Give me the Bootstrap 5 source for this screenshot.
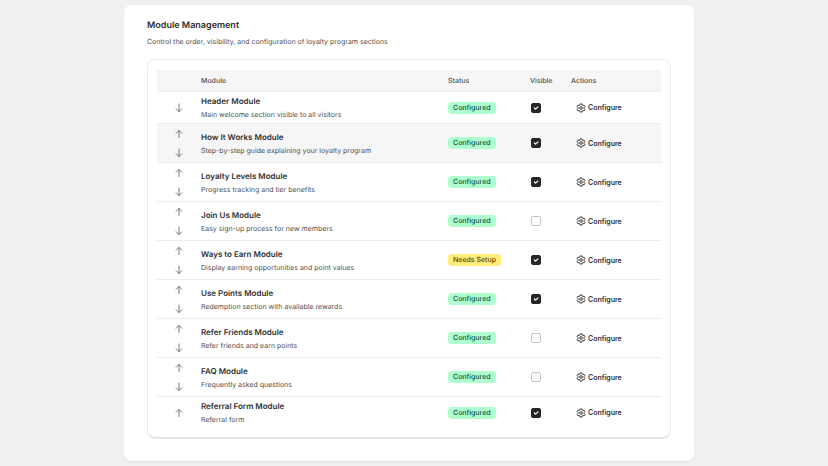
<!DOCTYPE html>
<html lang="en">
<head>
<meta charset="utf-8">
<meta name="viewport" content="width=device-width, initial-scale=1">
<title>Module Management</title>
<link href="https://cdn.jsdelivr.net/npm/bootstrap@5.3.0/dist/css/bootstrap.min.css" rel="stylesheet">
<style>
  body { background: #f0f0f0; color: #303030; font-family: Inter, "Liberation Sans", sans-serif; font-size: 7px; line-height: 13px; text-rendering: geometricPrecision; }
  .page { padding: 5px 134px 5px 124px; }
  .panel { background: #fff; border-radius: 8px; padding: 14px 23px 23px; box-shadow: 0 1px 1px #e4e4e4; }
  .panel-title { font-size: 9px; line-height: 13px; font-weight: 600; margin: 0 0 3px; }
  .panel-note { color: #505050; margin: 0 0 11px; }
  .list-box { border: 1px solid #ececec; border-bottom-color: #dcdcdc; border-radius: 8px; padding: 10px 9px 9px; box-shadow: 0 1px 1px #ececec; }
  .modules { --bs-table-bg: transparent; table-layout: fixed; color: inherit; }
  .modules > thead th { background: #f6f6f6; color: #505050; font-weight: 500; padding: 4px 0; border-bottom: 1px solid #ededed; }
  .modules > tbody td, .modules > tbody th { padding: 0; border-bottom: 1px solid #ededed; vertical-align: middle; font-weight: 400; }
  .modules > tbody th { padding: 3px 0 2px; }
  .modules > tbody tr:last-child > * { border-bottom: 0; }
  .modules > tbody tr.current > * { background: #f6f6f6; }
  .c-move { width: 44px; } .c-status { width: 82px; } .c-visible { width: 41px; } .c-action { width: 90px; }
  .move-btn { width: 20px; height: 19px; border: 0; padding: 0; background: none; color: #6a6a6a; }
  .name { font-size: 8px; font-weight: 600; }
  .about { color: #505050; }
  .pill { display: block; width: fit-content; font-weight: 500; line-height: 12px; padding: 0 5px; border-radius: 4px; }
  .pill-ok { background: #affecf; color: #0c5132; }
  .pill-warn { background: #ffeb78; color: #4f4700; }
  .modules .form-check-input { display: block; width: 10px; height: 10px; margin: 0 0 0 1px; border: 1px solid #c4c4c4; border-radius: 2px; }
  .modules .form-check-input:checked { background-color: #262626; border-color: #262626; }
  .conf-btn { border: 0; background: none; padding: 0 5px; gap: 2px; font-weight: 600; color: #303030; }
</style>
<script src="https://cdn.jsdelivr.net/npm/bootstrap@5.3.0/dist/js/bootstrap.bundle.min.js" defer></script>
</head>
<body>
<svg class="d-none" aria-hidden="true">
  <symbol id="up" viewBox="0 0 10 10"><path d="M5 8.500V1.500M2.200 4.200 5 1.400 7.800 4.200" fill="none" stroke="currentColor" stroke-width=".9" stroke-linecap="round" stroke-linejoin="round"/></symbol>
  <symbol id="down" viewBox="0 0 10 10"><path d="M5 1V8.500M2.200 5.800 5 8.600 7.800 5.800" fill="none" stroke="currentColor" stroke-width=".9" stroke-linecap="round" stroke-linejoin="round"/></symbol>
  <symbol id="gear" viewBox="0 0 20 20"><path d="M8.300 1.800h3.400l.6 2.300 1.600.9 2.300-.7 1.700 3-1.700 1.700v2l1.700 1.700-1.700 3-2.300-.7-1.600.9-.6 2.300H8.300l-.6-2.300-1.600-.9-2.300.7-1.700-3L3.800 11V9L2.100 7.300l1.700-3 2.300.7 1.600-.9z" fill="none" stroke="currentColor" stroke-width="1.900" stroke-linejoin="round"/><circle cx="10" cy="10" r="2.700" fill="none" stroke="currentColor" stroke-width="1.900"/></symbol>
</svg>
<main class="page">
  <section class="panel">
    <h1 class="panel-title">Module Management</h1>
    <p class="panel-note">Control the order, visibility, and configuration of loyalty program sections</p>
    <div class="list-box">
      <table class="table modules mb-0">
        <colgroup><col class="c-move"><col><col class="c-status"><col class="c-visible"><col class="c-action"></colgroup>
        <thead><tr><th></th><th scope="col">Module</th><th scope="col">Status</th><th scope="col">Visible</th><th scope="col">Actions</th></tr></thead>
        <tbody id="rows"></tbody>
      </table>
    </div>
  </section>
</main>
<script>
  const modules = [
    ["Header Module", "Main welcome section visible to all visitors", true, true],
    ["How It Works Module", "Step-by-step guide explaining your loyalty program", true, true],
    ["Loyalty Levels Module", "Progress tracking and tier benefits", true, true],
    ["Join Us Module", "Easy sign-up process for new members", true, false],
    ["Ways to Earn Module", "Display earning opportunities and point values", false, true],
    ["Use Points Module", "Redemption section with available rewards", true, true],
    ["Refer Friends Module", "Refer friends and earn points", true, false],
    ["FAQ Module", "Frequently asked questions", true, false],
    ["Referral Form Module", "Referral form", true, true]
  ];
  const icon = (id, size) => `<svg width="${size}" height="${size}" aria-hidden="true"><use href="#${id}"/></svg>`;
  const move = (dir, name) => `<button type="button" class="move-btn d-flex align-items-center justify-content-center" aria-label="Move ${name} ${dir}">${icon(dir, 10)}</button>`;
  document.getElementById("rows").innerHTML = modules.map(([name, about, ready, visible], i) => `
    <tr class="${i === 1 ? "current" : ""}">
      <td><div class="d-flex flex-column align-items-center">${i > 0 ? move("up", name) : ""}${i < modules.length - 1 ? move("down", name) : ""}</div></td>
      <th scope="row"><div class="name">${name}</div><div class="about">${about}</div></th>
      <td><span class="pill ${ready ? "pill-ok" : "pill-warn"}">${ready ? "Configured" : "Needs Setup"}</span></td>
      <td><input class="form-check-input" type="checkbox" aria-label="Show ${name}" ${visible ? "checked" : ""}></td>
      <td><button type="button" class="conf-btn d-flex align-items-center">${icon("gear", 10)}Configure</button></td>
    </tr>`).join("");
</script>
</body>
</html>
